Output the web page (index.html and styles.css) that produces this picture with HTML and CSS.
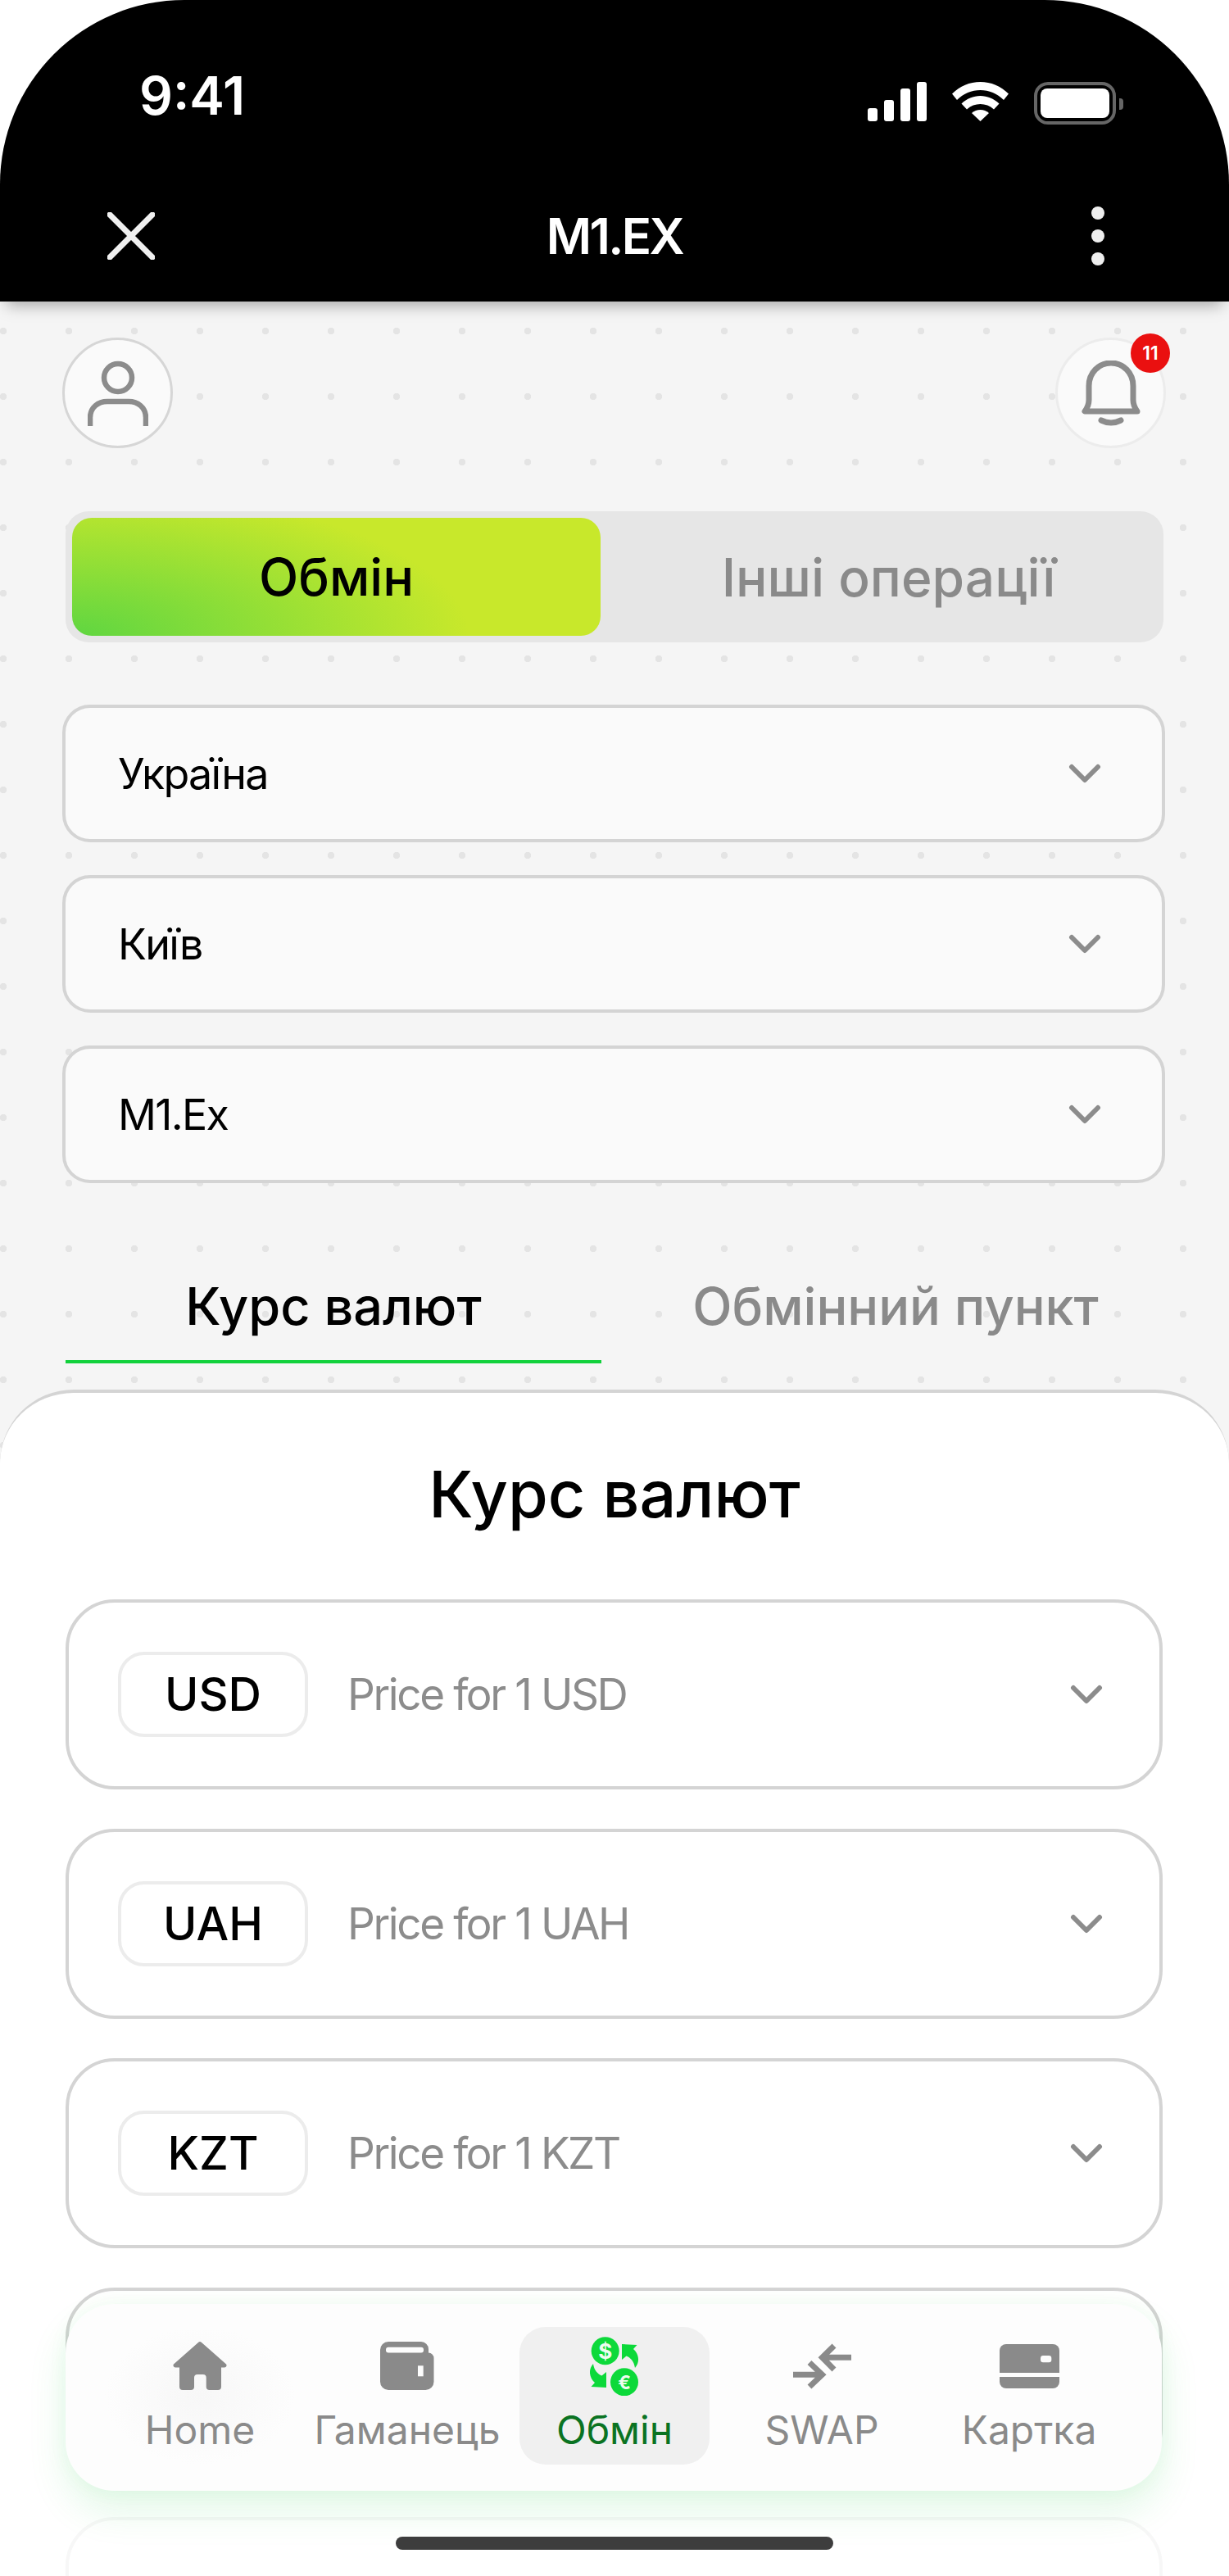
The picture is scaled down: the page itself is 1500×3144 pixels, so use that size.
FILE: index.html
```html
<!DOCTYPE html>
<html lang="uk">
<head>
  <meta charset="UTF-8">
  <title>M1.EX</title>
  <link rel="stylesheet" href="styles.css">
</head>
<body>
  <div class="phone">
    <!-- Status bar and app title -->
    <header class="topbar">
      <div class="status">
        <span class="time">9:41</span>
        <div class="status-icons">
          <div class="signal"><i class="b1"></i><i class="b2"></i><i class="b3"></i><i class="b4"></i></div>
          <svg class="wifi" width="69" height="48" viewBox="0 0 69 48">
            <path d="M34.5 0C21.5 0 9.5 5 0 14.500L6 22C14 14 24 10 34.500 10S55 14 63 22L69 14.500C59.500 5 47.500 0 34.500 0Z" fill="#fff"/>
            <path d="M34.500 17C26 17 18 20.500 11.500 26.500L18 33.500C23 29 28.500 27 34.500 27S46 29 51 33.500L57.500 26.500C51 20.500 43 17 34.500 17Z" fill="#fff"/>
            <path d="M34.500 34C30.500 34 27 35.300 24 38L34.500 48L45 38C42 35.300 38.500 34 34.500 34Z" fill="#fff"/>
          </svg>
          <div class="battery"><div class="battery-level"></div></div>
        </div>
      </div>
      <div class="appbar">
        <svg class="close" width="58" height="58" viewBox="0 0 58 58">
          <path d="M3 3L55 55M55 3L3 55" stroke="#f0f0f0" stroke-width="7" stroke-linecap="round"/>
        </svg>
        <span class="app-title">M1.EX</span>
        <div class="more"><i></i><i></i><i></i></div>
      </div>
    </header>

    <main class="content">
      <div class="top-icons">
        <div class="round-btn user-btn">
          <svg width="74" height="80" viewBox="0 0 74 80">
            <circle cx="37" cy="21" r="17" fill="none" stroke="#8c8c8c" stroke-width="6.500"/>
            <path d="M3 80V70C3 57 13 50 24 50H50C61 50 71 57 71 70V80" fill="none" stroke="#8c8c8c" stroke-width="6.500"/>
          </svg>
        </div>
        <div class="round-btn bell-btn">
          <svg width="72" height="80" viewBox="0 0 72 80">
            <path d="M4 62H68C65 58 63 53 63 48V31C63 15 51 3 36 3S9 15 9 31V48C9 53 7 58 4 62Z" fill="none" stroke="#8c8c8c" stroke-width="7" stroke-linejoin="round"/>
            <path d="M24 73Q36 79 48 73" fill="none" stroke="#8c8c8c" stroke-width="7" stroke-linecap="round"/>
          </svg>
          <span class="badge">11</span>
        </div>
      </div>

      <div class="switcher">
        <div class="switch-item active">Обмін</div>
        <div class="switch-item other">Інші операції</div>
      </div>

      <div class="selects">
        <div class="select">
          <span>Україна</span>
          <svg class="chevron" width="40" height="24" viewBox="0 0 40 24"><path d="M4 4L20 20L36 4" fill="none" stroke="#8c8c8c" stroke-width="6" stroke-linecap="round" stroke-linejoin="round"/></svg>
        </div>
        <div class="select">
          <span>Київ</span>
          <svg class="chevron" width="40" height="24" viewBox="0 0 40 24"><path d="M4 4L20 20L36 4" fill="none" stroke="#8c8c8c" stroke-width="6" stroke-linecap="round" stroke-linejoin="round"/></svg>
        </div>
        <div class="select">
          <span>M1.Ex</span>
          <svg class="chevron" width="40" height="24" viewBox="0 0 40 24"><path d="M4 4L20 20L36 4" fill="none" stroke="#8c8c8c" stroke-width="6" stroke-linecap="round" stroke-linejoin="round"/></svg>
        </div>
      </div>

      <div class="tabs">
        <div class="tab active">Курс валют</div>
        <div class="tab">Обмінний пункт</div>
      </div>

      <section class="sheet">
        <h1 class="sheet-title">Курс валют</h1>
        <div class="cards">
          <div class="card">
            <span class="pill">USD</span>
            <span class="price">Price for 1 USD</span>
            <svg class="chevron" width="40" height="24" viewBox="0 0 40 24"><path d="M4 4L20 20L36 4" fill="none" stroke="#8c8c8c" stroke-width="6" stroke-linecap="round" stroke-linejoin="round"/></svg>
          </div>
          <div class="card">
            <span class="pill">UAH</span>
            <span class="price">Price for 1 UAH</span>
            <svg class="chevron" width="40" height="24" viewBox="0 0 40 24"><path d="M4 4L20 20L36 4" fill="none" stroke="#8c8c8c" stroke-width="6" stroke-linecap="round" stroke-linejoin="round"/></svg>
          </div>
          <div class="card">
            <span class="pill">KZT</span>
            <span class="price">Price for 1 KZT</span>
            <svg class="chevron" width="40" height="24" viewBox="0 0 40 24"><path d="M4 4L20 20L36 4" fill="none" stroke="#8c8c8c" stroke-width="6" stroke-linecap="round" stroke-linejoin="round"/></svg>
          </div>
          <div class="card"></div>
          <div class="card"></div>
        </div>
      </section>
    </main>

    <!-- Floats over the list -->
    <div class="bottom-fade"></div>
    <nav class="tabbar">
      <div class="nav-item home-item">
        <div class="nav-icon">
          <svg width="66" height="60" viewBox="0 0 66 60"><path d="M31 1A3 3 0 0 1 35 1L64.500 27A2.500 2.500 0 0 1 63 31.500H59V55A4 4 0 0 1 55 59H44.700A4 4 0 0 1 40.700 55V44A4 4 0 0 0 36.700 40H30A4 4 0 0 0 26 44V55A4 4 0 0 1 22 59H12A4 4 0 0 1 8 55V31.500H3A2.500 2.500 0 0 1 1.500 27Z" fill="#8a8a8a"/></svg>
        </div>
        <span>Home</span>
      </div>
      <div class="nav-item">
        <div class="nav-icon">
          <svg width="66" height="60" viewBox="0 0 66 60">
            <path d="M10 0H50A9 9 0 0 1 59 9V13.500A6.500 6.500 0 0 1 65.500 20V49A10 10 0 0 1 55.500 59H10A10 10 0 0 1 0 49V10A10 10 0 0 1 10 0Z" fill="#8a8a8a"/>
            <rect x="7" y="6.700" width="46" height="6.700" rx="3" fill="#fdfdfd"/>
            <rect x="46" y="29.300" width="6.700" height="13" fill="#fdfdfd"/>
          </svg>
        </div>
        <span>Гаманець</span>
      </div>
      <div class="nav-item active">
        <div class="nav-icon">
          <svg width="60" height="72" viewBox="0 0 60 72">
            <circle cx="18.700" cy="17.300" r="17" fill="#0cd93a"/>
            <circle cx="42" cy="55.300" r="17" fill="#0cd93a"/>
            <text class="coin" x="18.700" y="26.500" font-size="26">$</text>
            <text class="coin" x="42" y="63.500" font-size="23">€</text>
            <path d="M39 9L57.500 10L53 15C59 20 62 30 55 38C54 30 49 25 44.500 23.500L39 28Z" fill="#0cd93a"/>
            <path d="M39 9L57.500 10L53 15C59 20 62 30 55 38C54 30 49 25 44.500 23.500L39 28Z" fill="#0cd93a" transform="rotate(180 29.500 35.500)"/>
          </svg>
        </div>
        <span>Обмін</span>
      </div>
      <div class="nav-item">
        <div class="nav-icon">
          <svg width="71" height="56" viewBox="0 0 71 56">
            <path d="M71 17.300H37M50 3L35.500 17.300L50 32" fill="none" stroke="#8a8a8a" stroke-width="7"/>
            <path d="M0 38.300H34M20 23.500L35.500 38.300L20 53" fill="none" stroke="#8a8a8a" stroke-width="7"/>
          </svg>
        </div>
        <span>SWAP</span>
      </div>
      <div class="nav-item">
        <div class="nav-icon">
          <svg width="73" height="54" viewBox="0 0 73 54">
            <path d="M8 0H65A8 8 0 0 1 73 8V35H0V8A8 8 0 0 1 8 0Z" fill="#8a8a8a"/>
            <path d="M0 40H73V46A8 8 0 0 1 65 54H8A8 8 0 0 1 0 46Z" fill="#8a8a8a"/>
            <rect x="50" y="14" width="13.300" height="8.300" rx="3" fill="#fdfdfd"/>
          </svg>
        </div>
        <span>Картка</span>
      </div>
    </nav>
    <div class="home-bar"></div>
  </div>
</body>
</html>
```

FILE: styles.css
```css
* {
  box-sizing: border-box;
  font-family: 'Inter', 'Noto Sans', sans-serif;
}

body {
  margin: 0;
  background: #fff;
}

.phone {
  position: relative;
  width: 1500px;
  height: 3144px;
  overflow: hidden;
  border-radius: 225px 225px 0 0;
}

/* Top black bar */
.topbar {
  position: relative;
  z-index: 2;
  height: 368px;
  padding-top: 84px;
  background: #000;
  box-shadow: 0 12px 18px -8px rgba(0, 0, 0, 0.34);
}

.status {
  display: flex;
  justify-content: space-between;
  align-items: center;
  height: 64px;
  padding: 0 138px 0 170px;
}

.time {
  color: #fff;
  font-size: 64px;
  font-weight: 600;
}

.status-icons {
  display: flex;
  align-items: flex-start;
  gap: 31px;
  padding-top: 20px;
}

.signal {
  display: flex;
  align-items: flex-end;
  gap: 8px;
  height: 48px;
}

.signal i {
  display: block;
  width: 12px;
  background: #fff;
  border-radius: 3px;
}

.signal .b1 { height: 16px; }
.signal .b2 { height: 26px; }
.signal .b3 { height: 40px; }
.signal .b4 { height: 48px; }

.battery {
  position: relative;
  width: 100px;
  height: 52px;
  padding: 4px;
  border: 4px solid #666;
  border-radius: 17px;
}

.battery::after {
  content: '';
  position: absolute;
  top: 16px;
  right: -13px;
  width: 5px;
  height: 14px;
  background: #666;
  border-radius: 0 4px 4px 0;
}

.battery-level {
  height: 100%;
  background: #fff;
  border-radius: 8px;
}

.appbar {
  display: grid;
  grid-template-columns: 1fr auto 1fr;
  align-items: center;
  height: 72px;
  margin-top: 104px;
  padding: 0 131px;
}

.app-title {
  color: #fff;
  font-size: 60px;
  font-weight: 600;
  letter-spacing: -2.600px;
}

.more {
  display: flex;
  flex-direction: column;
  gap: 12px;
  justify-self: end;
  margin-right: 21px;
}

.more i {
  display: block;
  width: 16px;
  height: 16px;
  background: #eee;
  border-radius: 50%;
}

/* Dotted page, the grid starts at the top of the screen */
.content {
  height: 2776px;
  padding-top: 44px;
  background-color: #f5f5f5;
  background-image: radial-gradient(circle at 4px 4px, #e4e4e4 4px, transparent 4.500px);
  background-position: 0 32px;
  background-size: 80px 80px;
}

.top-icons {
  display: flex;
  justify-content: space-between;
  padding: 0 77px 0 76px;
}

.round-btn {
  position: relative;
  display: flex;
  justify-content: center;
  align-items: center;
  width: 135px;
  height: 135px;
  background: #fafafa;
  border: 3px solid #d6d6d6;
  border-radius: 50%;
}

.bell-btn {
  border-color: #ececec;
}

.badge {
  position: absolute;
  top: -8px;
  right: -8px;
  width: 48px;
  height: 48px;
  line-height: 48px;
  text-align: center;
  color: #fff;
  font-size: 23px;
  font-weight: 600;
  background: #ea1010;
  border-radius: 50%;
}

.switcher {
  display: flex;
  height: 160px;
  margin: 77px 80px 0 80px;
  padding: 8px;
  background: #e6e6e6;
  border-radius: 28px;
}

.switch-item {
  display: flex;
  justify-content: center;
  align-items: center;
  flex: 1;
  color: #8a8a8a;
  font-size: 63px;
  font-weight: 500;
  border-radius: 24px;
}

.switch-item.other {
  padding-left: 24px;
  font-size: 64px;
}

.switch-item.active {
  flex: 0 0 645px;
  color: #000;
  background: radial-gradient(75% 125% at 0% 100%, #5fd641, #c8e82b 100%);
}

.selects {
  display: flex;
  flex-direction: column;
  gap: 40px;
  margin: 76px 78px 0 76px;
}

.select {
  display: flex;
  justify-content: space-between;
  align-items: center;
  height: 168px;
  padding: 0 74px 0 64px;
  color: #000;
  font-size: 52px;
  letter-spacing: -1.700px;
  background: #fafafa;
  border: 4px solid #d4d4d4;
  border-radius: 34px;
}

.tabs {
  display: flex;
  gap: 32px;
  margin: 84px 80px 0 80px;
}

.tab {
  display: flex;
  justify-content: center;
  align-items: center;
  flex: 1;
  height: 136px;
  color: #8a8a8a;
  font-size: 63px;
  font-weight: 500;
  border-bottom: 4px solid transparent;
}

.tab.active {
  color: #000;
  border-bottom-color: #12d13c;
}

.sheet {
  height: 1500px;
  margin-top: 32px;
  background: #fff;
  border-top: 4px solid #d4d4d4;
  border-radius: 90px 90px 0 0;
}

.sheet-title {
  margin: 0;
  padding-top: 73px;
  color: #000;
  font-size: 79px;
  font-weight: 500;
  line-height: 100px;
  text-align: center;
}

.cards {
  display: flex;
  flex-direction: column;
  gap: 48px;
  margin-top: 79px;
  padding: 0 81px 0 80px;
}

.card {
  display: flex;
  align-items: center;
  flex: none;
  height: 232px;
  padding: 0 69px 0 60px;
  background: #fff;
  border: 4px solid #d4d4d4;
  border-radius: 60px;
}

.pill {
  width: 232px;
  height: 104px;
  line-height: 96px;
  text-align: center;
  color: #000;
  font-size: 56px;
  font-weight: 500;
  border: 4px solid #ececec;
  border-radius: 32px;
}

.price {
  margin-left: 48px;
  color: #8c8c8c;
  font-size: 53px;
  letter-spacing: -2.400px;
}

.card .chevron {
  margin-left: auto;
}

/* Floating bottom navigation */
.bottom-fade {
  position: absolute;
  left: 0;
  right: 0;
  top: 3050px;
  bottom: 0;
  background: rgba(255, 255, 255, 0.8);
}

.tabbar {
  position: absolute;
  left: 80px;
  top: 2812px;
  display: grid;
  grid-template-columns: repeat(5, 232px);
  gap: 21px;
  width: 1338px;
  height: 228px;
  padding: 28px 46px 32px 48px;
  background: #fdfdfd;
  border-radius: 60px;
  box-shadow: 0 24px 48px rgba(20, 200, 60, 0.12), 0 0 24px rgba(20, 200, 60, 0.05);
}

.nav-item {
  display: flex;
  flex-direction: column;
  align-items: center;
  color: #8a8a8a;
  font-size: 48px;
  line-height: 56px;
  border-radius: 32px;
}

.nav-item span {
  margin-top: 2px;
}

.nav-item.active {
  color: #0a7322;
  background: #f0f0f0;
}

.home-item {
  background: radial-gradient(closest-side, #f7f7f7, rgba(247, 247, 247, 0));
}

.nav-icon {
  display: flex;
  justify-content: center;
  align-items: center;
  height: 96px;
}

.coin {
  fill: #eefcf0;
  font-weight: 700;
  text-anchor: middle;
}

.home-bar {
  position: absolute;
  left: 483px;
  top: 3096px;
  width: 534px;
  height: 16px;
  background: #3d3d3d;
  border-radius: 8px;
}
```
